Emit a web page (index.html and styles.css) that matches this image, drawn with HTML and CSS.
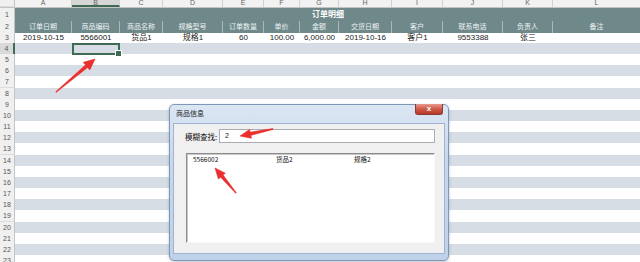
FILE: index.html
```html
<!DOCTYPE html>
<html lang="zh-CN">
<head>
    <meta charset="UTF-8">
    <title>订单明细</title>
    <link rel="stylesheet" href="styles.css">
</head>
<body>
    <div class="sheet">
        <div class="row col-head">
            <div class="num corner"></div>
            <div class="letter">A</div>
            <div class="letter active">B</div>
            <div class="letter">C</div>
            <div class="letter">D</div>
            <div class="letter">E</div>
            <div class="letter">F</div>
            <div class="letter">G</div>
            <div class="letter">H</div>
            <div class="letter">I</div>
            <div class="letter">J</div>
            <div class="letter">K</div>
            <div class="letter">L</div>
        </div>

        <div class="row title-row">
            <div class="num">1</div>
            <div class="title">订单明细</div>
        </div>

        <div class="row head-row">
            <div class="num">2</div>
            <div class="hcell">订单日期</div>
            <div class="hcell">商品编码</div>
            <div class="hcell">商品名称</div>
            <div class="hcell">规格型号</div>
            <div class="hcell">订单数量</div>
            <div class="hcell">单价</div>
            <div class="hcell">金额</div>
            <div class="hcell">交货日期</div>
            <div class="hcell">客户</div>
            <div class="hcell">联系电话</div>
            <div class="hcell">负责人</div>
            <div class="hcell">备注</div>
        </div>

        <div class="row data-row">
            <div class="num">3</div>
            <div class="cell">2019-10-15</div>
            <div class="cell">5566001</div>
            <div class="cell">货品1</div>
            <div class="cell">规格1</div>
            <div class="cell">60</div>
            <div class="cell">100.00</div>
            <div class="cell">6,000.00</div>
            <div class="cell">2019-10-16</div>
            <div class="cell">客户1</div>
            <div class="cell">9553388</div>
            <div class="cell">张三</div>
            <div class="cell"></div>
        </div>

        <div class="row band alt">
            <div class="num active">4</div>
            <div class="cell"></div>
            <div class="cell sel"></div>
            <div class="rest"></div>
        </div>
        <div class="row band"><div class="num">5</div></div>
        <div class="row band alt"><div class="num">6</div></div>
        <div class="row band"><div class="num">7</div></div>
        <div class="row band alt"><div class="num">8</div></div>
        <div class="row band"><div class="num">9</div></div>
        <div class="row band alt"><div class="num">10</div></div>
        <div class="row band"><div class="num">11</div></div>
        <div class="row band alt"><div class="num">12</div></div>
        <div class="row band"><div class="num">13</div></div>
        <div class="row band alt"><div class="num">14</div></div>
        <div class="row band"><div class="num">15</div></div>
        <div class="row band alt"><div class="num">16</div></div>
        <div class="row band"><div class="num">17</div></div>
        <div class="row band alt"><div class="num">18</div></div>
        <div class="row band"><div class="num">19</div></div>
        <div class="row band alt"><div class="num">20</div></div>
        <div class="row band"><div class="num">21</div></div>
        <div class="row band alt"><div class="num">22</div></div>
        <div class="row band"><div class="num">23</div></div>
    </div>

    <!-- search window -->
    <div class="dialog">
        <div class="dialog-bar">
            <span class="dialog-title">商品信息</span>
            <span class="close-btn">x</span>
        </div>
        <div class="dialog-body">
            <div class="search-line">
                <span class="search-label">模糊查找:</span>
                <div class="search-box">2</div>
            </div>
            <div class="result-list">
                <div class="result-item">
                    <span>5566002</span>
                    <span>货品2</span>
                    <span>规格2</span>
                </div>
            </div>
        </div>
    </div>

    <svg class="arrows" width="640" height="262" viewBox="0 0 640 262">
        <g transform="translate(56 92) rotate(-40.2)">
            <polygon points="0,-0.4 40,-1.6 40,-5 51,0 40,5 40,1.6 0,0.4" />
        </g>
        <g transform="translate(273 129) rotate(168)">
            <polygon points="0,-0.4 23,-1.6 23,-4.5 33.7,0 23,4.5 23,1.6 0,0.4" />
        </g>
        <g transform="translate(236 193) rotate(-130)">
            <polygon points="0,-0.4 22,-1.6 22,-4.5 32.6,0 22,4.5 22,1.6 0,0.4" />
        </g>
    </svg>
</body>
</html>
```

FILE: styles.css
```css
/* Base */
* {
    margin: 0;
    padding: 0;
    box-sizing: border-box;
}

body {
    position: relative;
    width: 640px;
    height: 262px;
    overflow: hidden;
    background: #fff;
    font-family: "Liberation Sans", "Noto Sans CJK SC", sans-serif;
    color: #222;
}

/* Sheet grid */
.sheet {
    width: 641px;
}

.row {
    display: grid;
    grid-template-columns: 15px 57px 48px 43px 60px 41px 36px 39px 53px 51px 60px 50px 88px;
    height: 11px;
}

.num {
    background: #f0f0f0;
    border-right: 1px solid #c4c4c4;
    border-bottom: 1px solid #dcdcdc;
    font-size: 7px;
    line-height: 11px;
    color: #555;
    text-align: center;
}

.num.active {
    background: #d9d9d9;
    border-right: 2px solid #3f6b52;
}

/* Column letters */
.col-head {
    height: 8px;
    background: #f2f2f2;
    border-bottom: 1px solid #c4c4c4;
}

.letter {
    font-size: 7px;
    line-height: 5px;
    color: #666;
    text-align: center;
    border-right: 1px solid #d2d2d2;
    overflow: hidden;
}

.letter.active {
    background: #d6d6d6;
    border-bottom: 2px solid #3f6b52;
}

/* Title and header rows */
.title-row {
    height: 13px;
}

.title-row .num {
    line-height: 13px;
}

.title {
    grid-column: 2 / -1;
    background: #6f898b;
    color: #fff;
    font-size: 8px;
    font-weight: 700;
    line-height: 13px;
    text-align: center;
    border-bottom: 1px solid #86a0a1;
}

.hcell {
    background: #6f898b;
    color: #eef3f3;
    font-size: 7px;
    line-height: 11px;
    text-align: center;
    border-right: 1px solid #a7b9ba;
    white-space: nowrap;
    overflow: hidden;
}

.cell {
    font-size: 8px;
    line-height: 11px;
    text-align: center;
    white-space: nowrap;
}

/* Striped empty rows */
.band {
    height: 11.17px;
}

.band .num {
    line-height: 11px;
}

.band.alt {
    background: #d6dde4;
}

.rest {
    grid-column: span 10;
}

.sel {
    position: relative;
    border: 2px solid #3f6b52;
}

.sel::after {
    content: "";
    position: absolute;
    right: -4px;
    bottom: -4px;
    width: 5px;
    height: 5px;
    background: #3f6b52;
    border: 1px solid #fff;
}

/* Dialog window */
.dialog {
    position: absolute;
    left: 169px;
    top: 104px;
    width: 280px;
    height: 157px;
    display: flex;
    flex-direction: column;
    border: 1px solid #7f97b6;
    border-radius: 5px;
    background: linear-gradient(#dbe6f3, #c6d7eb 40%, #bfd2e9);
    box-shadow: 0 1px 3px rgba(60, 80, 110, 0.35);
    font-family: "Noto Sans CJK SC", "Liberation Sans", sans-serif;
}

.dialog-bar {
    height: 18px;
    display: flex;
    justify-content: space-between;
    align-items: flex-start;
    padding: 0 5px 0 6px;
}

.dialog-title {
    font-size: 7px;
    line-height: 17px;
    color: #1a1a1a;
}

.close-btn {
    width: 28px;
    height: 11px;
    margin-top: -1px;
    border: 1px solid #8d3a33;
    border-top: none;
    border-radius: 0 0 3px 3px;
    background: linear-gradient(#e79a8d, #cf5a49 50%, #b8392a);
    color: #fff;
    font-family: "Liberation Sans", sans-serif;
    font-size: 8px;
    font-weight: 700;
    line-height: 10px;
    text-align: center;
}

.dialog-body {
    flex: 1;
    margin: 0 3px 6px;
    padding: 5px 9px 10px 11px;
    background: #f0f0f0;
    border: 1px solid #9fb4cf;
    display: flex;
    flex-direction: column;
    gap: 10px;
}

.search-line {
    display: flex;
    align-items: center;
    gap: 2px;
}

.search-label {
    font-size: 7.5px;
    color: #111;
    white-space: nowrap;
}

.search-box {
    flex: 1;
    height: 14px;
    padding-left: 5px;
    background: #fff;
    border: 1px solid #abadb3;
    font-family: "Liberation Sans", sans-serif;
    font-size: 7px;
    line-height: 12px;
}

.result-list {
    flex: 1;
    margin-left: 1px;
    background: #fff;
    border-top: 1px solid #8c8c8c;
    border-left: 1px solid #8c8c8c;
    border-right: 1px solid #f8f8f8;
    border-bottom: 1px solid #f8f8f8;
    box-shadow: inset 1px 1px 0 #c8c8c8;
}

.result-item {
    display: grid;
    grid-template-columns: 83px 78px auto;
    padding: 1px 0 0 6px;
    font-size: 6.5px;
    line-height: 9px;
    color: #111;
}

/* Callout arrows */
.arrows {
    position: absolute;
    left: 0;
    top: 0;
    pointer-events: none;
}

.arrows polygon {
    fill: #eb2f2f;
    stroke: #eb2f2f;
    stroke-width: 0.6;
    stroke-linejoin: round;
}
```
